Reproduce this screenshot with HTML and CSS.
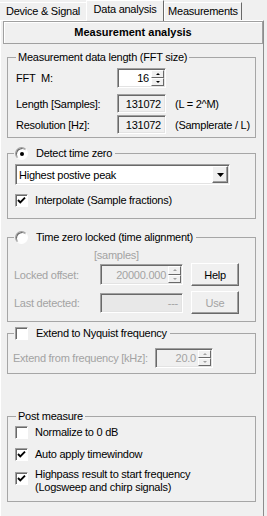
FILE: index.html
```html
<!DOCTYPE html>
<html lang="en">
<head>
    <meta charset="UTF-8">
    <meta name="viewport" content="width=device-width, initial-scale=1.0">
    <link rel="stylesheet" href="styles.css">
    <title>Data analysis</title>
</head>
<body>
    <ul class="tabs">
        <li class="tab tab-device">Device &amp; Signal</li>
        <li class="tab tab-data">Data analysis</li>
        <li class="tab tab-measure">Measurements</li>
    </ul>

    <div class="panel">
        <div class="header">Measurement analysis</div>

        <fieldset class="group group-fft">
            <legend>Measurement data length (FFT size)</legend>
            <div class="param-row row-m">
                <span>FFT&nbsp; M:</span>
                <div class="field spin white">
                    <span class="val">16</span>
                    <span class="arrows"><i class="up"></i><i class="down"></i></span>
                </div>
            </div>
            <div class="param-row row-len">
                <span>Length [Samples]:</span>
                <div class="field">131072</div>
                <span>(L = 2^M)</span>
            </div>
            <div class="param-row row-res">
                <span>Resolution [Hz]:</span>
                <div class="field">131072</div>
                <span>(Samplerate / L)</span>
            </div>
        </fieldset>

        <fieldset class="group group-detect">
            <legend class="legend-opt"><span class="opt"><span class="radio on"></span>Detect time zero</span></legend>
            <div class="combo">
                <span class="combo-text">Highest postive peak</span>
                <span class="combo-btn"><svg width="7" height="4" viewBox="0 0 7 4"><polygon points="0,0 7,0 3.5,4" fill="#000"/></svg></span>
            </div>
            <label class="check-row row-interp">
                <span class="check"><svg width="11" height="11" viewBox="0 0 11 11"><path d="M2 5 L4.3 7.4 L9 2.6" fill="none" stroke="#000" stroke-width="1.9"/></svg></span>
                Interpolate (Sample fractions)
            </label>
        </fieldset>

        <fieldset class="group group-locked">
            <legend class="legend-opt"><span class="opt"><span class="radio"></span>Time zero locked (time alignment)</span></legend>
            <div class="unit off">[samples]</div>
            <div class="offset-row row-offset">
                <span class="off">Locked offset:</span>
                <div class="field spin off">
                    <span class="val">20000.000</span>
                    <span class="arrows off"><i class="up"></i><i class="down"></i></span>
                </div>
                <span class="btn">Help</span>
            </div>
            <div class="offset-row row-last">
                <span class="off">Last detected:</span>
                <div class="field dim off">---</div>
                <span class="btn off">Use</span>
            </div>
        </fieldset>

        <fieldset class="group group-nyquist">
            <legend class="legend-opt"><span class="opt"><span class="check"></span>Extend to Nyquist frequency</span></legend>
            <div class="freq-row">
                <span class="off">Extend from frequency [kHz]:</span>
                <div class="field spin off">
                    <span class="val">20.0</span>
                    <span class="arrows off"><i class="up"></i><i class="down"></i></span>
                </div>
            </div>
        </fieldset>

        <fieldset class="group group-post">
            <legend>Post measure</legend>
            <label class="check-row row-norm">
                <span class="check"></span>
                Normalize to 0 dB
            </label>
            <label class="check-row row-auto">
                <span class="check"><svg width="11" height="11" viewBox="0 0 11 11"><path d="M2 5 L4.3 7.4 L9 2.6" fill="none" stroke="#000" stroke-width="1.9"/></svg></span>
                Auto apply timewindow
            </label>
            <label class="check-row row-high">
                <span class="check"><svg width="11" height="11" viewBox="0 0 11 11"><path d="M2 5 L4.3 7.4 L9 2.6" fill="none" stroke="#000" stroke-width="1.9"/></svg></span>
                <span>Highpass result to start frequency<br>(Logsweep and chirp signals)</span>
            </label>
        </fieldset>
    </div>
</body>
</html>
```

FILE: styles.css
```css
* {
    box-sizing: border-box;
}

body {
    margin: 0;
    width: 267px;
    height: 516px;
    overflow: hidden;
    background-color: #f0f0f0;
    font-family: "Liberation Sans", Arial, sans-serif;
    font-size: 11px;
    letter-spacing: -0.25px;
    color: #000;
}

/* tab strip */
.tabs {
    display: flex;
    align-items: flex-end;
    height: 20px;
    margin: 0;
    padding: 0;
    list-style: none;
    position: relative;
    z-index: 1;
}

.tab {
    height: 18px;
    line-height: 17px;
    text-align: center;
    border-top: 1px solid #fff;
    border-left: 1px solid #fff;
    border-right: 1px solid #696969;
}

.tab-device {
    width: 86px;
    border-left: none;
    border-right: none;
}

.tab-data {
    width: 78px;
    height: 21px;
    margin-bottom: -1px;
    background-color: #f0f0f0;
}

.tab-measure {
    width: 78px;
}

/* page body */
.panel {
    width: 264px;
    height: 496px;
    border-top: 1px solid #fff;
    border-left: 1px solid #fff;
    border-right: 1px solid #8c8c8c;
}

.header {
    height: 23px;
    margin-left: 2px;
    border: 1px solid #a0a0a0;
    box-shadow: inset 1px 1px 0 #fff;
    font-weight: bold;
    letter-spacing: 0;
    text-align: center;
    line-height: 21px;
}

.group {
    margin: 0 7px 0 6px;
    padding: 0;
    border: 1px solid #a6a6a6;
    min-width: 0;
}

.group legend {
    margin-left: 8px;
    padding: 0 2px;
    line-height: 13px;
}

.group .legend-opt {
    margin-left: 6px;
    padding: 0 3px 0 1px;
}

.opt {
    display: flex;
    align-items: center;
    gap: 8px;
}

.group-fft { margin-top: 7px; padding-bottom: 3px; }
.group-detect { margin-top: 9px; padding-bottom: 11px; }
.group-locked { margin-top: 12px; padding-bottom: 7px; }
.group-nyquist { margin-top: 5px; padding-bottom: 5px; }
.group-post { margin-top: 36px; padding-bottom: 7px; }

.off {
    color: #a3a3a3;
}

/* sunken edit boxes */
.field {
    display: flex;
    align-items: center;
    justify-content: flex-end;
    height: 19px;
    padding-right: 4px;
    border: 1px solid;
    border-color: #a0a0a0 #fff #fff #a0a0a0;
    box-shadow: inset 1px 1px 0 #696969, inset -1px -1px 0 #e3e3e3;
    background-color: #f0f0f0;
}

.white {
    background-color: #fff;
}

.dim {
    background-color: #e8e8e8;
}

.spin {
    padding-right: 0;
}

.spin .val {
    padding-right: 2px;
}

.arrows {
    display: flex;
    flex-direction: column;
    align-self: stretch;
    width: 13px;
    margin: 1px 1px 1px 0;
}

.arrows i {
    flex: 1;
    display: flex;
    align-items: center;
    justify-content: center;
    border: 1px solid;
    border-color: #fff #696969 #696969 #fff;
    background-color: #f0f0f0;
}

.arrows i::after {
    content: "";
    border-left: 2px solid transparent;
    border-right: 2px solid transparent;
}

.arrows .up::after {
    border-bottom: 2px solid #000;
}

.arrows .down::after {
    border-top: 2px solid #000;
}

.arrows.off .up::after {
    border-bottom-color: #a0a0a0;
}

.arrows.off .down::after {
    border-top-color: #a0a0a0;
}

/* FFT size rows */
.param-row {
    display: grid;
    grid-template-columns: 92px 49px auto;
    column-gap: 9px;
    align-items: center;
    padding-left: 8px;
}

.row-m { margin-top: 4px; }
.row-m .field { height: 20px; }
.row-len { margin-top: 6px; }
.row-res { margin-top: 2px; }

/* combo box */
.combo {
    display: flex;
    align-items: center;
    justify-content: space-between;
    width: 215px;
    height: 21px;
    margin: 4px 0 0 7px;
    padding-left: 3px;
    border: 1px solid;
    border-color: #a0a0a0 #fff #fff #a0a0a0;
    box-shadow: inset 1px 1px 0 #696969, inset -1px -1px 0 #e3e3e3;
    background-color: #fff;
}

.combo-btn {
    display: flex;
    align-items: center;
    justify-content: center;
    align-self: stretch;
    width: 16px;
    margin: 1px 1px 1px 0;
    border: 1px solid;
    border-color: #fff #696969 #696969 #fff;
    box-shadow: inset -1px -1px 0 #a0a0a0;
    background-color: #f0f0f0;
}

/* check boxes and radios */
.check-row {
    display: flex;
    align-items: center;
    gap: 7px;
    padding-left: 7px;
    line-height: 13px;
}

.check {
    flex: none;
    width: 13px;
    height: 13px;
    border: 1px solid;
    border-color: #a0a0a0 #fff #fff #a0a0a0;
    box-shadow: inset 1px 1px 0 #696969;
    background-color: #fff;
}

.check svg {
    display: block;
}

.radio {
    flex: none;
    display: flex;
    align-items: center;
    justify-content: center;
    width: 13px;
    height: 13px;
    border-radius: 50%;
    border: 1px solid;
    border-color: #a0a0a0 #fff #fff #a0a0a0;
    box-shadow: inset 1px 1px 0 #696969;
    background-color: #fff;
}

.radio.on::after {
    content: "";
    width: 4px;
    height: 4px;
    border-radius: 50%;
    background-color: #000;
}

.row-interp { margin-top: 9px; }
.row-norm { margin-top: 3px; }
.row-auto { margin-top: 9px; }

.row-high {
    align-items: flex-start;
    margin-top: 7px;
}

.row-high .check {
    margin-top: 4px;
}

/* locked offset rows */
.unit {
    margin-top: 5px;
    padding-left: 86px;
    line-height: 13px;
}

.offset-row {
    display: grid;
    grid-template-columns: 78px 83px 48px;
    column-gap: 8px;
    align-items: center;
    height: 23px;
    padding-left: 6px;
}

.row-offset { margin-top: 1px; }
.row-offset .field { height: 21px; }
.row-last { margin-top: 5px; }
.row-last .field { height: 20px; }

.btn {
    display: flex;
    align-items: center;
    justify-content: center;
    height: 23px;
    border: 1px solid;
    border-color: #fff #696969 #696969 #fff;
    box-shadow: inset -1px -1px 0 #a0a0a0;
    background-color: #f0f0f0;
}

/* nyquist row */
.freq-row {
    display: grid;
    grid-template-columns: 142px 58px;
    align-items: center;
    margin-top: 8px;
    padding-left: 5px;
}

.freq-row .field {
    height: 20px;
}
```
